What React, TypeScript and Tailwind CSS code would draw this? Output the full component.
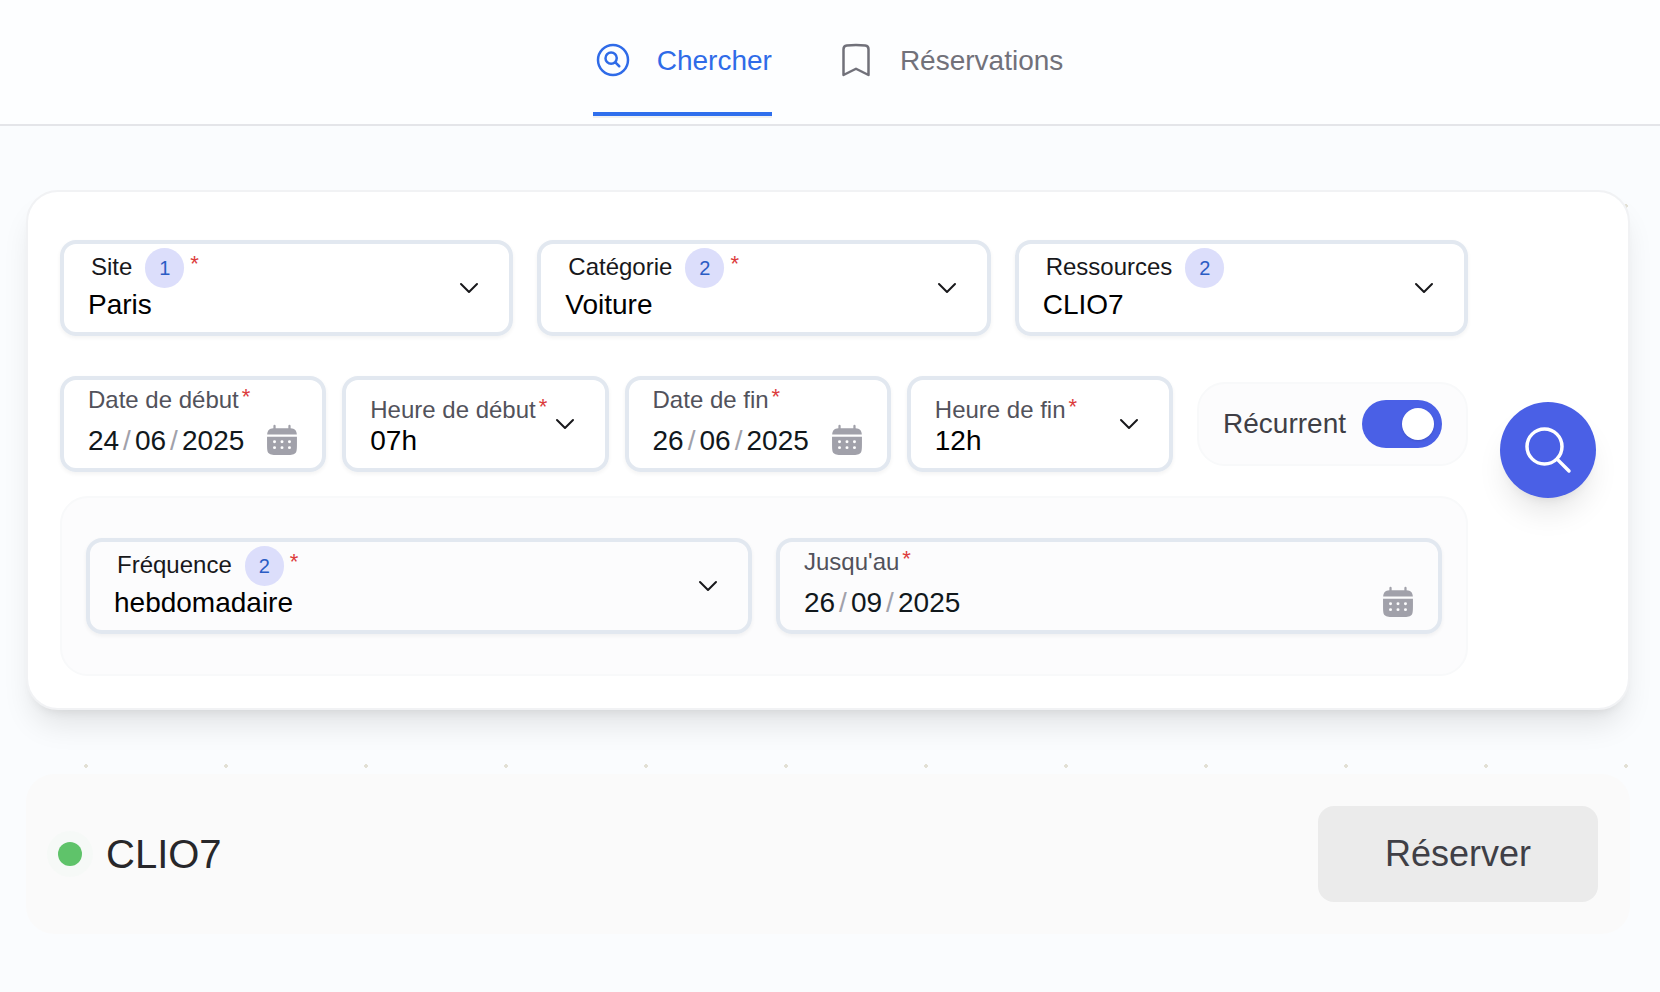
import { useId, useState } from "react";
import type { ReactNode } from "react";
import {
  HiOutlineBookmark,
  HiOutlineMagnifyingGlass,
  HiOutlineMagnifyingGlassCircle,
} from "react-icons/hi2";

const FIELD =
  "flex h-24 min-w-0 items-center rounded-2xl border-4 border-[#e2e8f0] px-6 shadow-[0_2px_4px_rgba(0,0,0,0.05)]";
const SELECT =
  "block h-[34px] w-full appearance-none bg-transparent text-[28px] leading-[34px] text-black outline-none";
const SEGMENT = "h-[34px] bg-transparent p-0 text-[28px] leading-[34px] text-[#11181c] outline-none";

function Required() {
  return <span className="-mt-[3px] text-[22px] leading-[inherit] text-[#dc3c3c]">*</span>;
}

function Chevron() {
  return (
    <svg
      viewBox="0 0 24 24"
      className="pointer-events-none size-8 shrink-0 text-[#18181b]"
      fill="none"
      stroke="currentColor"
      strokeWidth="1.5"
      strokeLinecap="round"
      strokeLinejoin="round"
      aria-hidden="true"
    >
      <path d="m6 9 6 6 6-6" />
    </svg>
  );
}

function CalendarIcon() {
  return (
    <svg viewBox="1.3 1.2 21.4 21.4" className="size-8 shrink-0 text-[#a1a1aa]" fill="currentColor" aria-hidden="true">
      <path d="M7.75 2.5a.75.75 0 0 0-1.5 0v1.58c-1.44.115-2.384.397-3.078 1.092-.695.694-.977 1.639-1.093 3.078h19.842c-.116-1.44-.398-2.384-1.093-3.078-.694-.695-1.639-.977-3.078-1.093V2.5a.75.75 0 0 0-1.5 0v1.513C15.585 4 14.839 4 14 4h-4c-.839 0-1.585 0-2.25.013z" />
      <path
        fillRule="evenodd"
        d="M2 12c0-.839 0-1.585.013-2.25h19.974C22 10.415 22 11.161 22 12v2c0 3.771 0 5.657-1.172 6.828S17.771 22 14 22h-4c-3.771 0-5.657 0-6.828-1.172S2 17.771 2 14zm15 2a1 1 0 1 0 0-2 1 1 0 0 0 0 2m0 4a1 1 0 1 0 0-2 1 1 0 0 0 0 2m-4-5a1 1 0 1 1-2 0 1 1 0 0 1 2 0m0 4a1 1 0 1 1-2 0 1 1 0 0 1 2 0m-6-3a1 1 0 1 0 0-2 1 1 0 0 0 0 2m0 4a1 1 0 1 0 0-2 1 1 0 0 0 0 2"
      />
    </svg>
  );
}

function CountSelect({
  label,
  count,
  value,
  required = false,
}: {
  label: string;
  count: number;
  value: string;
  required?: boolean;
}) {
  const id = useId();
  return (
    <div className={FIELD}>
      <div className="min-w-0 flex-1 self-start pt-1">
        <label htmlFor={id} className="flex h-10 pl-[3px] text-2xl leading-[38px] text-[#18181b]">
          {label}
          <span className="mr-1.5 ml-[13px] h-10 w-[39px] rounded-full bg-[#dcdefb] text-center text-xl leading-10 text-[#2a5cc4]">
            {count}
          </span>
          {required && <Required />}
        </label>
        <select id={id} defaultValue={value} className={SELECT}>
          <option>{value}</option>
        </select>
      </div>
      <Chevron />
    </div>
  );
}

function HourSelect({ label, value }: { label: string; value: string }) {
  const id = useId();
  return (
    <div className={FIELD}>
      <div className="min-w-0 flex-1 self-start pt-4">
        <label htmlFor={id} className="flex h-7 gap-[3px] text-2xl leading-7 whitespace-nowrap text-[#52525b]">
          {label}
          <Required />
        </label>
        <select id={id} defaultValue={value} className={SELECT}>
          <option>{value}</option>
        </select>
      </div>
      <Chevron />
    </div>
  );
}

function DateField({ label, value }: { label: string; value: [string, string, string] }) {
  const id = useId();
  const slash: ReactNode = <span className="w-4 text-center text-[#a1a1aa]">/</span>;
  return (
    <div className={FIELD}>
      <div className="min-w-0 flex-1 self-start pt-1">
        <label htmlFor={id} className="flex h-8 gap-[3px] text-2xl leading-8 whitespace-nowrap text-[#52525b]">
          {label}
          <Required />
        </label>
        <div className="mt-2 flex items-start text-[28px] leading-[34px]">
          <input id={id} defaultValue={value[0]} inputMode="numeric" className={`${SEGMENT} w-[31px]`} />
          {slash}
          <input aria-label={`${label}, mois`} defaultValue={value[1]} inputMode="numeric" className={`${SEGMENT} w-[31px]`} />
          {slash}
          <input aria-label={`${label}, année`} defaultValue={value[2]} inputMode="numeric" className={`${SEGMENT} w-16`} />
          <button type="button" aria-label={`${label}, calendrier`} className="ml-auto">
            <CalendarIcon />
          </button>
        </div>
      </div>
    </div>
  );
}

function RecurringSwitch({ checked, onChange }: { checked: boolean; onChange: (v: boolean) => void }) {
  return (
    <label className="flex items-center gap-4 rounded-[28px] border-2 border-[#f8f9fa] bg-[#fcfcfd] px-6 py-4 text-[28px] leading-8 text-[#3f3f46]">
      Récurrent
      <input
        type="checkbox"
        role="switch"
        checked={checked}
        onChange={(e) => onChange(e.target.checked)}
        className="h-12 w-20 appearance-none rounded-full bg-[#d4d4d8] p-2 before:block before:size-8 before:rounded-full before:bg-white before:shadow-sm checked:bg-[#4a60e6] checked:before:ml-8"
      />
    </label>
  );
}

export default function App() {
  const [recurring, setRecurring] = useState(true);

  return (
    <div className="flex min-h-screen flex-col bg-[#fafcfe] font-['Liberation_Sans',Arial,sans-serif]">
      <header className="border-b-2 border-[#e4e5e9] bg-[#fdfeff] pr-1">
        <nav className="flex justify-center gap-16 pt-10 pb-2 text-[28px]">
          <a
            href="#chercher"
            aria-current="page"
            className="flex items-start gap-6 border-b-4 border-[#2f6fed] pb-[30px] leading-[42px] text-[#2f6be8] shadow-[0_2px_0_rgba(0,0,0,0.05)]"
          >
            <HiOutlineMagnifyingGlassCircle className="size-10" aria-hidden="true" />
            Chercher
          </a>
          <a
            href="#reservations"
            className="flex items-start gap-6 border-b-4 border-transparent pb-[30px] leading-[42px] text-[#71717a]"
          >
            <HiOutlineBookmark className="size-10" aria-hidden="true" />
            Réservations
          </a>
        </nav>
      </header>

      <main className="flex-1 bg-[radial-gradient(circle,#e2e0d5_2px,transparent_2px)] bg-[length:140px_140px] bg-[position:16px_10px] pt-16 pr-[30px] pb-14 pl-[26px]">
        <form
          onSubmit={(e) => e.preventDefault()}
          className="flex items-center gap-8 rounded-[32px] border-2 border-[#f1f2f4] bg-white bg-clip-padding px-8 pt-12 pb-8 shadow-[0_20px_30px_-6px_rgba(0,0,0,0.1),0_8px_12px_-8px_rgba(0,0,0,0.1)]"
        >
          <div className="min-w-0 flex-1">
            <div className="grid grid-cols-3 gap-6">
              <CountSelect label="Site" count={1} value="Paris" required />
              <CountSelect label="Catégorie" count={2} value="Voiture" required />
              <CountSelect label="Ressources" count={2} value="CLIO7" />
            </div>

            <div className="mt-10 flex items-center gap-6">
              <div className="grid min-w-0 flex-1 grid-cols-4 gap-4">
                <DateField label="Date de début" value={["24", "06", "2025"]} />
                <HourSelect label="Heure de début" value="07h" />
                <DateField label="Date de fin" value={["26", "06", "2025"]} />
                <HourSelect label="Heure de fin" value="12h" />
              </div>
              <RecurringSwitch checked={recurring} onChange={setRecurring} />
            </div>

            {recurring && (
              <div className="mt-6 grid grid-cols-2 gap-6 rounded-[28px] border-2 border-[#f8f9fa] bg-[#fcfcfd] px-6 py-10">
                <CountSelect label="Fréquence" count={2} value="hebdomadaire" required />
                <DateField label="Jusqu'au" value={["26", "09", "2025"]} />
              </div>
            )}
          </div>

          <button
            type="submit"
            aria-label="Rechercher"
            className="-mt-4 flex size-24 shrink-0 items-center justify-center self-center rounded-full bg-[#4a60e6] text-white shadow-[0_20px_30px_-6px_rgba(0,0,0,0.1),0_8px_12px_-8px_rgba(0,0,0,0.1)]"
          >
            <HiOutlineMagnifyingGlass className="size-14" aria-hidden="true" />
          </button>
        </form>

        <section className="mt-16 flex items-center gap-6 rounded-[28px] bg-[#fafafa] p-8">
          <span className="size-6 rounded-full bg-[#5fc36a] shadow-[0_0_0_11px_#f6f9f7]" />
          <h2 className="flex-1 text-[40px] leading-12 text-[#27272a]">CLIO7</h2>
          <button type="button" className="h-24 w-[280px] rounded-2xl bg-[#ebebeb] text-4xl text-[#3f3f46]">
            Réserver
          </button>
        </section>
      </main>
    </div>
  );
}
